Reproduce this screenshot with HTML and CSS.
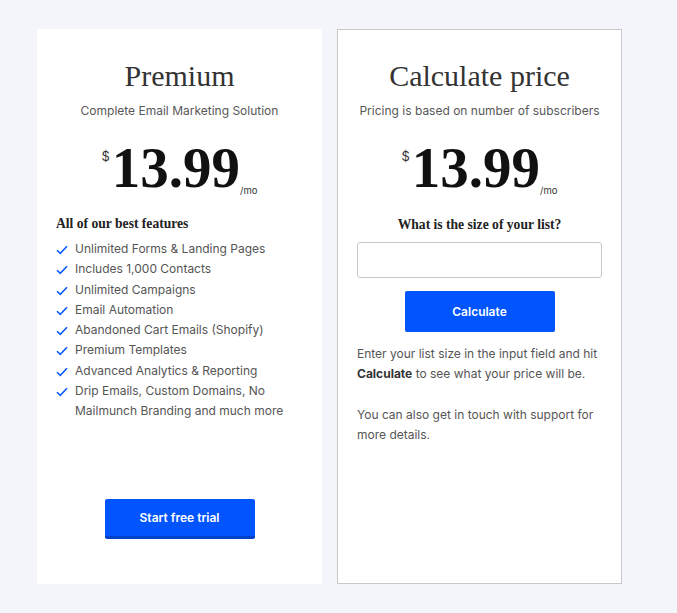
FILE: index.html
```html
<!DOCTYPE html>
<html>
<head>
<meta charset="utf-8">
<link rel="stylesheet" href="styles.css">
</head>
<body>
<div class="wrap">
  <div class="card plain">
    <h2 class="title">Premium</h2>
    <p class="sub">Complete Email Marketing Solution</p>
    <div class="price"><span class="cur">$</span><span class="amt">13.99</span><span class="per">/mo</span></div>
    <h4 class="feat-head">All of our best features</h4>
    <ul class="feats">
      <li><svg class="chk" viewBox="0 0 12 10"><path d="M1 5.2 L4.3 8.4 L11 1.2" fill="none" stroke="#0a5cff" stroke-width="1.6"/></svg><span>Unlimited Forms &amp; Landing Pages</span></li>
      <li><svg class="chk" viewBox="0 0 12 10"><path d="M1 5.2 L4.3 8.4 L11 1.2" fill="none" stroke="#0a5cff" stroke-width="1.6"/></svg><span>Includes 1,000 Contacts</span></li>
      <li><svg class="chk" viewBox="0 0 12 10"><path d="M1 5.2 L4.3 8.4 L11 1.2" fill="none" stroke="#0a5cff" stroke-width="1.6"/></svg><span>Unlimited Campaigns</span></li>
      <li><svg class="chk" viewBox="0 0 12 10"><path d="M1 5.2 L4.3 8.4 L11 1.2" fill="none" stroke="#0a5cff" stroke-width="1.6"/></svg><span>Email Automation</span></li>
      <li><svg class="chk" viewBox="0 0 12 10"><path d="M1 5.2 L4.3 8.4 L11 1.2" fill="none" stroke="#0a5cff" stroke-width="1.6"/></svg><span>Abandoned Cart Emails (Shopify)</span></li>
      <li><svg class="chk" viewBox="0 0 12 10"><path d="M1 5.2 L4.3 8.4 L11 1.2" fill="none" stroke="#0a5cff" stroke-width="1.6"/></svg><span>Premium Templates</span></li>
      <li><svg class="chk" viewBox="0 0 12 10"><path d="M1 5.2 L4.3 8.4 L11 1.2" fill="none" stroke="#0a5cff" stroke-width="1.6"/></svg><span>Advanced Analytics &amp; Reporting</span></li>
      <li><svg class="chk" viewBox="0 0 12 10"><path d="M1 5.2 L4.3 8.4 L11 1.2" fill="none" stroke="#0a5cff" stroke-width="1.6"/></svg><span>Drip Emails, Custom Domains, No Mailmunch Branding and much more</span></li>
    </ul>
    <div class="spacer"></div>
    <div class="btn-row"><button class="btn trial">Start free trial</button></div>
  </div>
  <div class="card bordered">
    <h2 class="title">Calculate price</h2>
    <p class="sub">Pricing is based on number of subscribers</p>
    <div class="price"><span class="cur">$</span><span class="amt">13.99</span><span class="per">/mo</span></div>
    <h4 class="q">What is the size of your list?</h4>
    <input class="field" type="text">
    <div class="btn-row"><button class="btn calc">Calculate</button></div>
    <p class="info">Enter your list size in the input field and hit <b>Calculate</b> to see what your price will be.</p>
    <p class="info">You can also get in touch with support for more details.</p>
  </div>
</div>
</body>
</html>
```

FILE: styles.css
```css
html, body {
  margin: 0;
  padding: 0;
  background: #f4f5fa;
}
body {
  font-family: Inter, Roboto, sans-serif;
  color: #555;
}
.wrap {
  display: flex;
  gap: 15px;
  padding: 29px 0 0 37px;
}
.card {
  width: 285px;
  height: 555px;
  box-sizing: border-box;
  background: #fff;
  padding: 0 19px 45px;
  display: flex;
  flex-direction: column;
}
.bordered {
  border: 1px solid #c9c9cc;
  padding: 0 19px;
}
.title {
  font-family: "Liberation Serif", serif;
  font-weight: 400;
  font-size: 30px;
  line-height: 36px;
  color: #333;
  text-align: center;
  margin: 29px 0 0;
}
.bordered .title { margin-top: 28px; }
.sub {
  font-size: 12px;
  line-height: 20px;
  text-align: center;
  margin: 7px 0 0;
  color: #585858;
}
.price {
  display: flex;
  justify-content: center;
  align-items: flex-start;
  margin-top: 19px;
  color: #111;
}
.cur {
  font-size: 13px;
  line-height: 14px;
  margin-top: 9px;
  margin-right: 2px;
  color: #333;
}
.amt {
  font-family: "Liberation Serif", serif;
  font-weight: 700;
  font-size: 57px;
  line-height: 56px;
}
.per {
  font-size: 9.5px;
  line-height: 10px;
  align-self: flex-end;
  margin-bottom: 0;
  color: #333;
}
.feat-head, .q {
  font-family: "Liberation Serif", serif;
  font-weight: 700;
  font-size: 13.6px;
  line-height: 18px;
  color: #222;
  margin: 19px 0 6px;
}
.q { text-align: center; margin: 20px 0 0; }
.feats {
  list-style: none;
  margin: 0;
  padding: 0;
  font-size: 12px;
  line-height: 20.3px;
}
.feats li {
  display: flex;
  align-items: flex-start;
}
.chk {
  width: 12px;
  height: 10px;
  flex: none;
  margin: 6px 7px 0 0;
}
.spacer { flex: 1; }
.btn-row { display: flex; justify-content: center; }
.btn {
  width: 150px;
  border: none;
  background: #0055ff;
  color: #fff;
  font-family: Inter, sans-serif;
  font-weight: 600;
  font-size: 12px;
  border-radius: 2px;
  padding: 0;
}
.trial {
  height: 40px;
  border-bottom: 3px solid #0043c9;
}
.calc {
  height: 41px;
  margin-top: 13px;
}
.field {
  display: block;
  width: 100%;
  box-sizing: border-box;
  height: 36px;
  border: 1px solid #c8c8c8;
  border-radius: 3px;
  margin: 8px 0 0;
}
.info {
  font-size: 12px;
  line-height: 20.3px;
  margin: 12px -12px 0 0;
  color: #555;
}
.info + .info { margin-top: 20px; }
.info b { color: #333; }
```
